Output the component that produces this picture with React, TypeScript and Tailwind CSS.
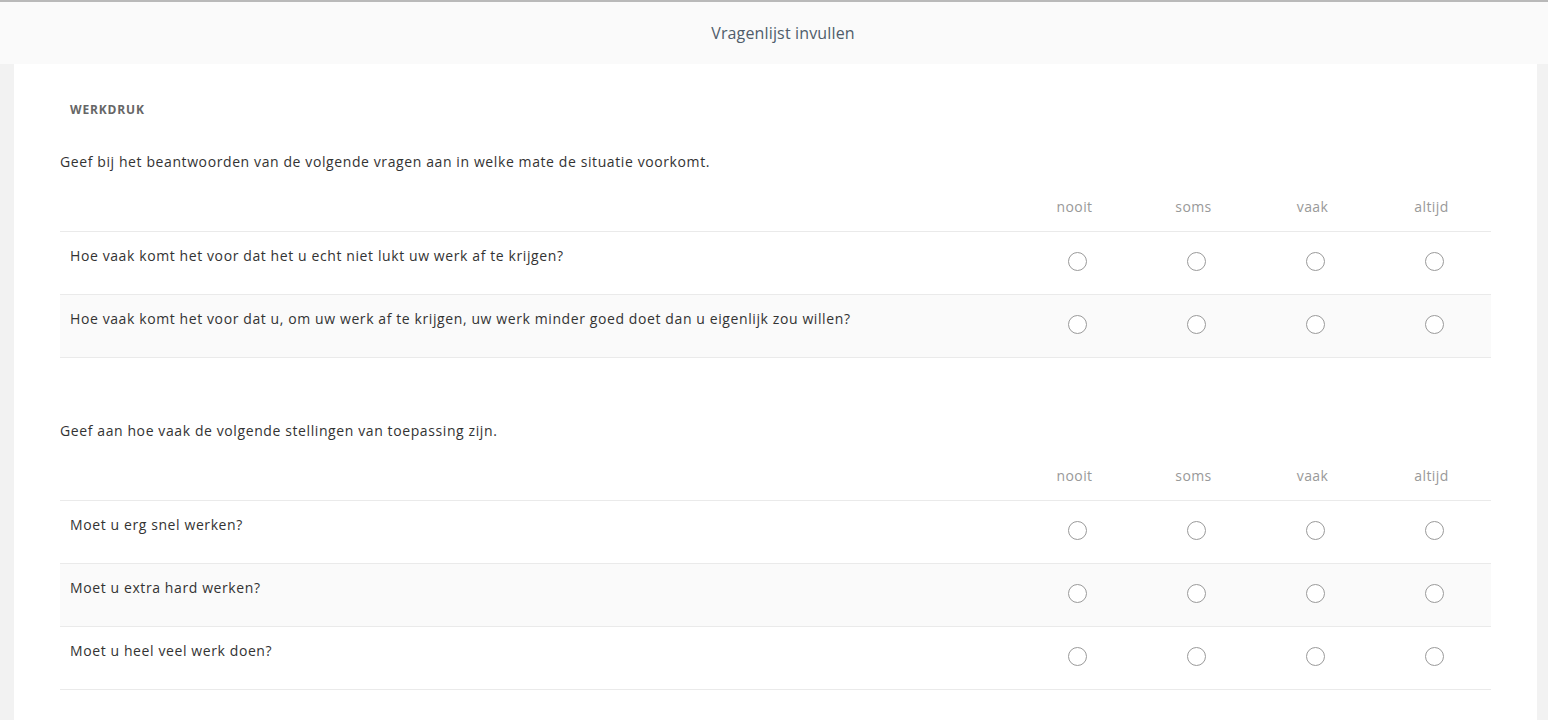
import React, { useState } from 'react';

const options = ['nooit', 'soms', 'vaak', 'altijd'];

const sections = [
  {
    intro: 'Geef bij het beantwoorden van de volgende vragen aan in welke mate de situatie voorkomt.',
    questions: [
      'Hoe vaak komt het voor dat het u echt niet lukt uw werk af te krijgen?',
      'Hoe vaak komt het voor dat u, om uw werk af te krijgen, uw werk minder goed doet dan u eigenlijk zou willen?',
    ],
  },
  {
    intro: 'Geef aan hoe vaak de volgende stellingen van toepassing zijn.',
    questions: ['Moet u erg snel werken?', 'Moet u extra hard werken?', 'Moet u heel veel werk doen?'],
  },
];

const Radio: React.FC<{ checked: boolean; onClick: () => void }> = ({ checked, onClick }) => (
  <button
    onClick={onClick}
    className="w-[19px] h-[19px] rounded-full border-[1.5px] border-[#9a9a9a] bg-white flex items-center justify-center"
  >
    {checked && <span className="w-[9px] h-[9px] rounded-full bg-[#666]" />}
  </button>
);

export default function App() {
  const [answers, setAnswers] = useState<Record<string, number>>({});

  return (
    <div className="min-h-screen bg-[#f2f2f2] font-['Open_Sans',sans-serif] text-[#333]">
      {/* Header */}
      <header className="h-[64px] bg-[#fafafa] border-t-2 border-[#b9b9b9] flex items-center justify-center pl-[18px]">
        <h1 className="text-[16px] tracking-[0.15px] text-[#4f5d6b]">Vragenlijst invullen</h1>
      </header>

      {/* Card */}
      <div className="ml-[14px] mr-[11px] bg-white px-[46px] pt-[38px] pb-[40px]">
        <h2 className="pl-[10px] text-[12px] leading-[16px] font-bold uppercase text-[#666] tracking-[0.07em]">
          Werkdruk
        </h2>

        {sections.map((section, si) => (
          <div key={si} className={si === 0 ? 'mt-[34px]' : 'mt-[63px]'}>
            <p className="text-[14px] leading-[20px] tracking-[0.6px]">{section.intro}</p>

            {/* Column labels */}
            <div className="mt-[25px] flex border-b border-[#eaeaea] pb-[14px]">
              <div className="flex-1" />
              {options.map((o) => (
                <div key={o} className="w-[119px] text-center text-[14px] leading-[20px] tracking-[0.4px] text-[#999]">
                  {o}
                </div>
              ))}
            </div>

            {/* Rows */}
            {section.questions.map((q, qi) => {
              const key = `${si}-${qi}`;
              return (
                <div
                  key={key}
                  className={`flex h-[63px] border-b border-[#eaeaea] ${qi % 2 === 1 ? 'bg-[#fafafa]' : 'bg-white'}`}
                >
                  <div className="flex-1 pl-[10px] pt-[14px] text-[14px] leading-[20px] tracking-[0.6px]">{q}</div>
                  {options.map((o, oi) => (
                    <div key={o} className="w-[119px] flex justify-center pt-[20px] pl-[5px]">
                      <Radio
                        checked={answers[key] === oi}
                        onClick={() => setAnswers({ ...answers, [key]: oi })}
                      />
                    </div>
                  ))}
                </div>
              );
            })}
          </div>
        ))}
      </div>
    </div>
  );
}
